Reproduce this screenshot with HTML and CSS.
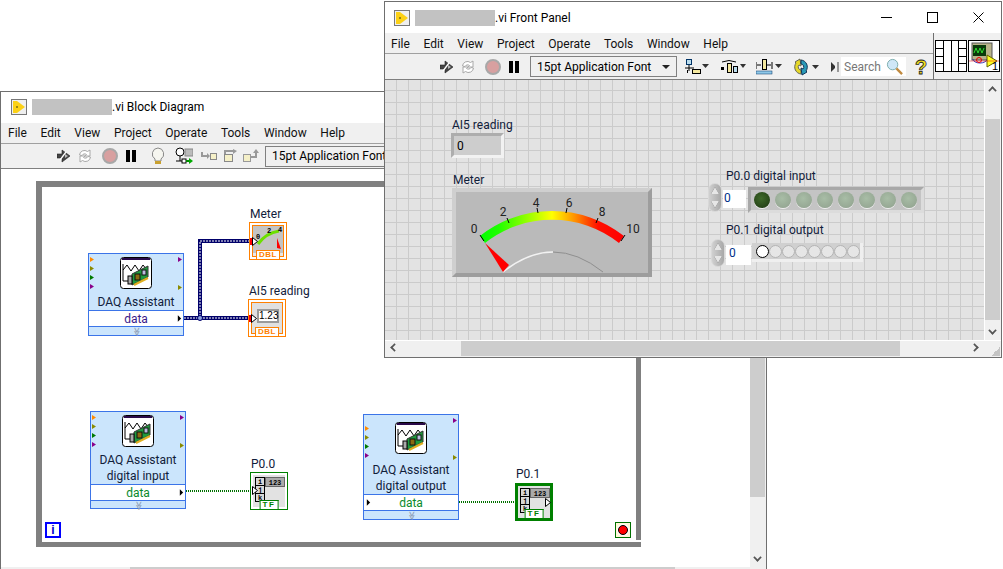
FILE: index.html
```html
<!DOCTYPE html>
<html lang="en">
<head>
<meta charset="utf-8">
<title>Block Diagram and Front Panel</title>
<link rel="stylesheet" href="styles.css">
</head>
<body>
<svg class="defs" width="0" height="0" aria-hidden="true">
  <defs>
    <linearGradient id="arcGrad" x1="480" x2="624" y1="0" y2="0" gradientUnits="userSpaceOnUse">
      <stop offset="0" stop-color="#00ff00"/><stop offset=".13" stop-color="#20ff00"/>
      <stop offset=".38" stop-color="#b4ff00"/><stop offset=".5" stop-color="#ffff00"/>
      <stop offset=".66" stop-color="#ff9000"/><stop offset=".82" stop-color="#ff1000"/><stop offset="1" stop-color="#ff0000"/>
    </linearGradient>
    <symbol id="vi" viewBox="0 0 16 16">
      <rect x=".5" y=".5" width="15" height="15" fill="#efefef" stroke="#777"/>
      <path d="M2 2h4l8 6-8 6H2z" fill="#fcd116"/><circle cx="6" cy="8" r="1" fill="#7a6a10"/>
    </symbol>
    <symbol id="run" viewBox="0 0 14 14">
      <path d="M0 5h5V1l8 6-8 6V9H0z" fill="#444" stroke="#222" stroke-width=".6"/>
      <path d="M3 11l6-8" stroke="#fff" stroke-width="1.300"/>
      <path d="M8 5l3 2-3 2z" fill="#bbb"/>
    </symbol>
    <symbol id="cont" viewBox="0 0 14 14">
      <path d="M1.500 6a5 5 0 0 1 8-3.500l2.500-1.500v6H7l1.500-1.500a3 3 0 0 0-4.500 1z" fill="#fff" stroke="#a8a8a8"/>
      <path d="M12.500 8a5 5 0 0 1-8 3.500l-2.500 1.500V7h5l-1.500 1.500a3 3 0 0 0 4.500-1z" fill="#fff" stroke="#a8a8a8"/>
    </symbol>
    <symbol id="daq" viewBox="0 0 32 32">
      <rect x=".5" y=".5" width="31" height="31" rx="3" fill="#fff" stroke="#000"/>
      <rect x="2" y="1" width="28" height="2" fill="#2a0a4a"/>
      <path d="M3 7v17h6M3 13l4-5 4 6 4-6 4 6 4-6 4 5" fill="none" stroke="#000"/>
      <path d="M12 17l16-8v11l-16 8z" fill="#1f9a3c" stroke="#333"/>
      <rect x="15" y="17" width="5" height="6" fill="#8a6a10" stroke="#111"/>
      <rect x="22" y="13" width="4" height="5" fill="#bbd" stroke="#111"/>
      <path d="M14 28l14-7" stroke="#e0b020" stroke-width="2"/>
      <rect x="8" y="19" width="4" height="8" fill="#aaa" stroke="#000"/>
    </symbol>
    <symbol id="arrow" viewBox="0 0 6 8"><path d="M1 0l4 4-4 4z"/></symbol>
    <symbol id="tin" viewBox="0 0 8 9"><rect x="0" y="1" width="3" height="7" fill="#f00"/><path d="M2.500 .5L7.500 4.500 2.500 8.500z" fill="#fff" stroke="#000"/></symbol>
    <symbol id="twhite" viewBox="0 0 6 9"><path d="M.5 .5L5.500 4.500 .5 8.500z" fill="#fff" stroke="#000"/></symbol>
    <symbol id="array" viewBox="0 0 36 36">
      <rect x="2" y="2" width="32" height="32" fill="#e2e2e2"/>
      <rect x="4.500" y="4.500" width="9" height="8" fill="#d8d8d8" stroke="#000"/>
      <rect x="4.500" y="12.500" width="9" height="8" fill="#d8d8d8" stroke="#000"/>
      <rect x="4.500" y="20.500" width="9" height="8" fill="#d8d8d8" stroke="#000"/>
      <rect x="14.500" y="4.500" width="19" height="9" fill="#aaa" stroke="#666"/>
      <text x="24" y="12" class="mini">123</text>
      <text x="9" y="11" class="mini">i</text><text x="9" y="19" class="mini">j</text><text x="9" y="27" class="mini">k</text>
    </symbol>
    <symbol id="meterIcon" viewBox="0 0 36 36">
      <rect x="3" y="3" width="30" height="27" fill="#c4c4c4"/>
      <path d="M8 21q8-11 21-13" fill="none" stroke="#6ce000" stroke-width="3"/>
      <path d="M27 15l4 11-4-1z" fill="#f00"/>
      <text x="8" y="16" class="mini">0</text><text x="19" y="10" class="mini">2</text><text x="30" y="9" class="mini">4</text>
    </symbol>
  </defs>
</svg>

<section class="window bd-window">
  <header class="titlebar">
    <svg class="vi-icon"><use href="#vi"/></svg>
    <span class="redacted"></span>
    <span class="title-text">.vi Block Diagram</span>
  </header>
  <nav class="menubar">
    <span>File</span><span>Edit</span><span>View</span><span>Project</span><span>Operate</span><span>Tools</span><span>Window</span><span>Help</span>
  </nav>
  <div class="toolbar bd-toolbar">
    <svg class="tb run"><use href="#run"/></svg>
    <svg class="tb cont"><use href="#cont"/></svg>
    <span class="abort"></span>
    <span class="pause"></span>
    <svg class="tb bulb" viewBox="0 0 16 18"><path d="M8 1a6 6 0 0 0-3 11v2h6v-2a6 6 0 0 0-3-11z" fill="#f6f6f0" stroke="#888"/><path d="M5 14h6v3H5z" fill="#c8a030"/></svg>
    <svg class="tb probe" viewBox="0 0 18 18"><circle cx="5" cy="5" r="4" fill="#fff" stroke="#000"/><rect x="10" y="2" width="8" height="7" fill="#bbb" stroke="#888"/><path d="M5 9v5H1M5 14h5" stroke="#000" fill="none"/><rect x="7" y="12" width="4" height="4" fill="#fff" stroke="#000"/><path d="M11 14h4" stroke="#080" stroke-width="2"/><path d="M14 11l4 3-4 3z" fill="#0a0"/></svg>
    <svg class="tb step" viewBox="0 0 16 14"><path d="M1 3v4h6" fill="none" stroke="#999" stroke-width="2"/><path d="M6 4l3 3-3 3z" fill="#999"/><rect x="9.500" y="4.500" width="6" height="6" fill="#f5f0c8" stroke="#888"/></svg>
    <svg class="tb step" viewBox="0 0 16 14"><path d="M3 5V2h9" fill="none" stroke="#999" stroke-width="2"/><path d="M11 0l4 2-4 3z" fill="#999"/><rect x="2.500" y="5.500" width="8" height="7" fill="#f5f0c8" stroke="#888"/></svg>
    <svg class="tb step" viewBox="0 0 16 14"><rect x=".5" y="5.500" width="7" height="7" fill="#f5f0c8" stroke="#999"/><path d="M7 8h6V3" fill="none" stroke="#999" stroke-width="2"/><path d="M10 4l3-4 3 4z" fill="#999"/></svg>
    <div class="fontbox bd-fontbox">15pt Application Font</div>
  </div>
  <div class="work">
    <div class="canvas">
      <div class="loop">
        <span class="notch"></span>
      </div>
      <span class="iter">i</span>
      <span class="stop"><i></i></span>

      <svg class="wires" width="640" height="400">
        <path class="wire-blue" d="M183 149H199V72H249M199 149H249"/>
        <path class="wire-blue-in" d="M183 149H199V72H249M199 149H249"/>
        <circle cx="199" cy="149" r="2.500" fill="#8aa0e0" stroke="#00006a"/>
        <path class="wire-green" d="M185 322H250"/>
        <path class="wire-green" d="M458 333H515"/>
      </svg>

      <div class="daq daq-a">
        <svg class="daq-icon"><use href="#daq"/></svg>
        <div class="daq-name">DAQ Assistant</div>
        <div class="daq-data dbl">data<svg class="out"><use href="#arrow"/></svg></div>
        <div class="daq-foot">≫</div>
        <span class="pins"><i class="p-o"></i><i class="p-y"></i><i class="p-g"></i><i class="p-m"></i></span>
        <span class="rpins"><i class="p-m"></i><i class="p-y"></i></span>
      </div>
      <div class="daq daq-b">
        <svg class="daq-icon"><use href="#daq"/></svg>
        <div class="daq-name">DAQ Assistant<br>digital input</div>
        <div class="daq-data bool">data<svg class="out"><use href="#arrow"/></svg></div>
        <div class="daq-foot">≫</div>
        <span class="pins"><i class="p-o"></i><i class="p-y"></i><i class="p-g"></i><i class="p-m"></i></span>
        <span class="rpins"><i class="p-m"></i><i class="p-y"></i></span>
      </div>
      <div class="daq daq-c">
        <svg class="daq-icon"><use href="#daq"/></svg>
        <div class="daq-name">DAQ Assistant<br>digital output</div>
        <div class="daq-data bool"><svg class="in"><use href="#arrow"/></svg>data</div>
        <div class="daq-foot">≫</div>
        <span class="pins pins-low"><i class="p-o"></i><i class="p-y"></i><i class="p-g"></i><i class="p-m"></i></span>
        <span class="rpins rpins-wide"><i class="p-m"></i><i class="p-y"></i></span>
      </div>

      <span class="label l-meter">Meter</span>
      <span class="label l-ai5">AI5 reading</span>
      <span class="label l-p00">P0.0</span>
      <span class="label l-p01">P0.1</span>

      <div class="term orange t-meter">
        <svg class="term-art"><use href="#meterIcon"/></svg>
        <span class="tag tag-o">DBL</span>
        <svg class="tin"><use href="#tin"/></svg>
      </div>
      <div class="term orange t-ai5">
        <span class="num-123">1.23</span>
        <span class="tag tag-o">DBL</span>
        <svg class="tin"><use href="#tin"/></svg>
      </div>
      <div class="term green t-p00">
        <svg class="term-art"><use href="#array"/></svg>
        <span class="tag tag-g">TF</span>
        <svg class="twhite tw-in"><use href="#twhite"/></svg>
      </div>
      <div class="term green thick t-p01">
        <svg class="term-art"><use href="#array"/></svg>
        <span class="tag tag-g">TF</span>
        <svg class="twhite tw-out"><use href="#twhite"/></svg>
      </div>
    </div>
    <div class="vbar bd-vbar"><span class="thumb-v"></span><span class="chev-d"></span></div>
  </div>
  <div class="hbar bd-hbar"><span class="thumb-h"></span></div>
</section>

<section class="window fp-window">
  <header class="titlebar">
    <svg class="vi-icon"><use href="#vi"/></svg>
    <span class="redacted"></span>
    <span class="title-text">.vi Front Panel</span>
    <span class="controls">
      <svg class="ctl" viewBox="0 0 11 11"><path d="M0 5.500h11" stroke="#000"/></svg>
      <svg class="ctl" viewBox="0 0 11 11"><rect x=".5" y=".5" width="10" height="10" fill="none" stroke="#000"/></svg>
      <svg class="ctl" viewBox="0 0 11 11"><path d="M.5 .5l10 10M10.500 .5l-10 10" stroke="#000"/></svg>
    </span>
  </header>
  <div class="fp-head">
    <div class="fp-bars">
      <nav class="menubar">
        <span>File</span><span>Edit</span><span>View</span><span>Project</span><span>Operate</span><span>Tools</span><span>Window</span><span>Help</span>
      </nav>
      <div class="toolbar fp-toolbar">
        <svg class="tb run"><use href="#run"/></svg>
        <svg class="tb cont"><use href="#cont"/></svg>
        <span class="abort"></span>
        <span class="pause"></span>
        <div class="fontbox fp-fontbox">15pt Application Font<i class="caret"></i></div>
        <svg class="tool t-align" viewBox="0 0 24 16"><rect x="1.500" y=".5" width="5" height="5" fill="#bde" stroke="#036"/><path d="M0 9h9M4 6v6" stroke="#000"/><path d="M2 11h1v3H2z"/><rect x="7.500" y="10.500" width="8" height="4" fill="#f5e9a0" stroke="#000"/><path d="M17 5h7l-3.500 4z" fill="#333"/></svg>
        <svg class="tool t-dist" viewBox="0 0 26 16"><path d="M2 3q7-3 14 0" fill="none" stroke="#000"/><rect x="1" y="8" width="3" height="3"/><rect x="7.500" y="4.500" width="4" height="9" fill="#f5e9a0" stroke="#000"/><rect x="13.500" y="7.500" width="4" height="6" fill="#bde" stroke="#000"/><path d="M20 5h6l-3 4z" fill="#333"/></svg>
        <svg class="tool t-resize" viewBox="0 0 26 16"><path d="M0 3v7M16 3v7M1 6h4M11 6h4" stroke="#000"/><rect x="6.500" y=".5" width="4" height="10" fill="#f5e9a0" stroke="#000"/><rect x="0" y="12" width="16" height="3" fill="#8fc8e8" stroke="#036" stroke-width=".5"/><path d="M19 5h7l-3.500 4z" fill="#333"/></svg>
        <svg class="tool t-order" viewBox="0 0 26 18"><path d="M7 1L2 4l1 1a7 7 0 0 0 5 11v-4a3 3 0 0 1-2-5l2 1z" fill="#e6d829" stroke="#665"/><path d="M9 17l5-3-1-1a7 7 0 0 0-5-11v4a3 3 0 0 1 2 5l-2-1z" fill="#2a9ab8" stroke="#135"/><path d="M19 7h7l-3.500 4z" fill="#333"/></svg>
        <span class="more"></span>
        <span class="search">Search<svg class="lens" viewBox="0 0 18 18"><circle cx="7" cy="7" r="5.500" fill="#cfe7f7" stroke="#7aa"/><path d="M11 11l6 6" stroke="#c08a40" stroke-width="2.500"/></svg></span>
        <span class="help">?</span>
      </div>
    </div>
    <div class="pane-area">
      <svg class="conn" viewBox="0 0 32 32"><rect x=".5" y=".5" width="31" height="31" fill="#fff" stroke="#000"/><path d="M8.500 1v30M16.500 1v30M23.500 1v30M1 8.500h7.500M1 16.500h7.500M1 23.500h7.500M23.500 8.500h8M23.500 16.500h8M23.500 23.500h8" stroke="#000" fill="none"/></svg>
      <svg class="conn" viewBox="0 0 32 32"><rect x=".5" y=".5" width="31" height="31" fill="#fff" stroke="#000"/><rect x="4" y="3" width="20" height="17" fill="#b8b48a" stroke="#555"/><rect x="5" y="5" width="13" height="11" fill="#0a3a0a"/><path d="M6 13l2-5 2 5 2-5 2 5 2-5" fill="none" stroke="#30e030"/><path d="M5 19a7 4 0 0 0 14 0" fill="none" stroke="#33b"/><circle cx="11" cy="20" r="2.500" fill="none" stroke="#e00"/><path d="M19 15l10 6-10 6z" fill="#ffff20" stroke="#660"/><path d="M1 21h30" stroke="#e00" stroke-width=".5"/><text x="27" y="30" class="one">1</text></svg>
    </div>
  </div>
  <div class="work">
    <div class="panel">
      <span class="label fl-ai5">AI5 reading</span>
      <div class="num-ind">0</div>
      <span class="label fl-meter">Meter</span>
      <svg class="meter" width="200" height="89" viewBox="452 188 200 89">
        <rect x="452" y="188" width="200" height="89" fill="#bababa"/>
        <path d="M452 188h200l-4 4H456v81l-4 4z" fill="#cfcfcf"/>
        <path d="M652 188v89H452l4-4h192v-81z" fill="#9d9d9d"/>
        <path d="M480 236A116 116 0 0 1 624 236L619 243A108 108 0 0 0 485 243Z" fill="url(#arcGrad)"/>
        <path d="M480 235l4 6M507 218l2 5M537 208l1 5M567 208l-1 5M598 218l-2 5M625 235l-4 6" stroke="#000"/>
        <path d="M503 272Q528 252 553 252" fill="none" stroke="#f2f2f2" stroke-width="1.500"/>
        <path d="M553 252Q578 252 603 272" fill="none" stroke="#8f8f8f"/>
        <path d="M485 243L509 265 503 272Z" fill="#f00"/>
        <g class="scale">
          <text x="474" y="233">0</text><text x="503" y="216">2</text><text x="536" y="207">4</text>
          <text x="569" y="207">6</text><text x="602" y="216">8</text><text x="633" y="233">10</text>
        </g>
      </svg>
      <span class="label fl-p00">P0.0 digital input</span>
      <div class="spin sp-a"><span class="up"></span><span class="down"></span></div>
      <div class="field f-a">0</div>
      <div class="leds leds-a"><i class="on"></i><i></i><i></i><i></i><i></i><i></i><i></i><i></i></div>
      <span class="label fl-p01">P0.1 digital output</span>
      <div class="spin sp-b"><span class="up"></span><span class="down"></span></div>
      <div class="field f-b">0</div>
      <div class="leds leds-b"><i class="on"></i><i></i><i></i><i></i><i></i><i></i><i></i><i></i></div>
    </div>
    <div class="vbar fp-vbar"><span class="chev-u"></span><span class="thumb-v"></span><span class="chev-d"></span></div>
  </div>
  <div class="hbar fp-hbar"><span class="chev-l"></span><span class="thumb-h"></span><span class="chev-r"></span><span class="grip"></span></div>
</section>
</body>
</html>
```

FILE: styles.css
```css
* { box-sizing: border-box; }
html, body { margin: 0; height: 100%; }
body {
  position: relative;
  width: 1003px;
  height: 569px;
  overflow: hidden;
  background: #fff;
  font: 12px/16px Roboto, "Noto Sans", sans-serif;
  color: #000;
}
.defs { position: absolute; }

.window {
  position: absolute;
  display: flex;
  flex-direction: column;
  background: #fff;
  border: 1px solid #6f6f6f;
}
.bd-window { left: 0; top: 91px; width: 767px; height: 478px; border-bottom: 0; }
.fp-window { left: 384px; top: 1px; width: 618px; height: 357px; }

.titlebar { display: flex; align-items: center; flex: none; background: #fff; height: 31px; }
.bd-window .titlebar { padding: 0 0 2px 10px; }
.fp-window .titlebar { padding-left: 9px; }
.vi-icon { width: 16px; height: 16px; flex: none; }
.redacted { width: 80px; height: 16px; margin-left: 5px; background: #c2c2c2; flex: none; }
.title-text { white-space: nowrap; }
.controls { display: flex; margin-left: auto; padding-right: 17px; gap: 35px; }
.ctl { width: 11px; height: 11px; }

.menubar {
  display: flex;
  flex: none;
  height: 21px;
  padding: 0 0 0 7px;
  gap: 13.6px;
  align-items: center;
  background: #f0f0f0;
  border-bottom: 1px solid #a0a0a0;
  color: #111;
}
.fp-window .menubar { padding: 1px 0 0 6px; }
.toolbar {
  display: flex;
  align-items: center;
  flex: none;
  height: 25px;
  background: #f0f0f0;
  border-bottom: 1px solid #7f7f7f;
}
.bd-toolbar { padding-left: 56px; overflow: hidden; }
.fp-toolbar { padding-left: 55px; height: 26px; }
.tb { width: 14px; height: 14px; flex: none; }
.cont { margin-left: 7px; }
.abort {
  width: 16px; height: 16px; margin-left: 10px; flex: none;
  border-radius: 50%; background: #d8a0a0; border: 2px solid #a8a8a8;
}
.pause {
  width: 10px; height: 12px; margin-left: 8px; flex: none;
  border-left: 4px solid #000; border-right: 4px solid #000;
}
.bulb { width: 16px; height: 18px; margin-left: 14px; }
.probe { width: 18px; height: 18px; margin-left: 9px; }
.step { width: 16px; height: 14px; margin-left: 8px; }
.step + .step { margin-left: 5px; }
.fontbox {
  display: flex; align-items: center; flex: none;
  height: 21px; padding-left: 6px;
  border: 1px solid #808080; background: #f0f0f0; white-space: nowrap;
}
.bd-fontbox { margin-left: 6px; width: 130px; }
.fp-fontbox { margin-left: 11px; width: 147px; position: relative; }
.caret {
  position: absolute; right: 6px; top: 8px;
  border: 4px solid transparent; border-top: 4px solid #222; border-bottom: 0;
}
.tool { height: 16px; flex: none; }
.t-align { width: 24px; margin-left: 8px; }
.t-dist { width: 26px; margin-left: 11px; }
.t-resize { width: 26px; margin-left: 10px; }
.t-order { width: 26px; margin-left: 11px; height: 18px; }
.more {
  width: 6px; height: 10px; margin-left: 12px; flex: none;
  border-left: 4px solid #333; border-top: 4px solid transparent; border-bottom: 4px solid transparent;
  box-shadow: 2px 0 0 #999;
}
.search {
  display: flex; align-items: center; flex: none;
  width: 65px; height: 19px; margin-left: 4px; padding-left: 3px;
  background: #fff; color: #777;
}
.lens { width: 17px; height: 17px; margin-left: 5px; }
.help {
  margin-left: 9px; flex: none;
  font: bold 20px/20px "Liberation Sans", sans-serif;
  color: #f3e21c; -webkit-text-stroke: .8px #222;
}

.fp-head { display: flex; flex: none; height: 47px; }
.fp-bars { width: 548px; flex: none; }
.pane-area {
  flex: 1; display: flex; align-items: center; gap: 1px;
  padding: 0 0 0 1px; background: #f0f0f0;
  border-left: 1px solid #6f6f6f; border-bottom: 1px solid #7f7f7f;
}
.conn { width: 32px; height: 32px; flex: none; }
.one { font: 11px "Liberation Sans", sans-serif; text-anchor: middle; }

.work { flex: 1; display: flex; min-height: 0; }
.canvas { position: relative; flex: 1; background: #fff; }
.vbar { flex: none; width: 16px; background: #f0f0f0; position: relative; }
.fp-vbar { width: 17px; border-left: 1px solid #fff; }
.thumb-v { position: absolute; left: 0; right: 1px; background: #cdcdcd; }
.bd-vbar .thumb-v { top: 0; height: 328px; }
.fp-vbar .thumb-v { top: 39px; height: 201px; }
.chev-d, .chev-u {
  position: absolute; left: 4px; width: 7px; height: 7px;
  border: solid #555; border-width: 0 2px 2px 0; transform: rotate(45deg) scale(.85);
}
.chev-d { bottom: 6px; }
.chev-u { top: 7px; transform: rotate(225deg) scale(.85); }
.hbar { position: relative; flex: none; height: 17px; background: #f0f0f0; }
.bd-hbar { height: 2px; }
.thumb-h { position: absolute; top: 0; bottom: 1px; background: #cdcdcd; }
.bd-hbar .thumb-h { left: 129px; width: 545px; bottom: 0; }
.fp-hbar { border-top: 1px solid #fff; }
.fp-hbar .thumb-h { left: 76px; width: 439px; }
.chev-l, .chev-r {
  position: absolute; top: 3px; width: 7px; height: 7px;
  border: solid #555; border-width: 2px 2px 0 0; transform: rotate(45deg) scale(.85);
}
.chev-l { left: 6px; transform: rotate(225deg) scale(.85); }
.chev-r { left: 586px; }
.grip {
  position: absolute; right: 1px; bottom: 1px; width: 9px; height: 9px;
  background: linear-gradient(135deg, transparent 50%, #c4c4c4 50%);
}

.loop {
  position: absolute; left: 35px; top: 12px; width: 605px; height: 366px;
  border: solid #808080; border-width: 6px 5px 5px 6px;
}
.notch {
  position: absolute; right: -5px; bottom: 0; width: 5px; height: 2px; background: #fff;
}
.iter {
  position: absolute; left: 44px; top: 353px; width: 16px; height: 16px;
  border: 2px solid #0000ff; background: #fff; color: #0000d0;
  font: bold 12px/12px "Liberation Sans", sans-serif; text-align: center;
}
.stop {
  position: absolute; left: 614px; top: 353px; width: 16px; height: 16px;
  display: flex; align-items: center; justify-content: center;
  border: 1px solid #006f00; background: #fff9d8;
}
.stop i { width: 10px; height: 10px; border-radius: 50%; background: #f00; border: 1px solid #000; box-shadow: 0 0 0 1px #fff; }

.wires { position: absolute; left: 0; top: 0; }
.wire-blue { fill: none; stroke: #00006a; stroke-width: 4; }
.wire-blue-in { fill: none; stroke: #fff; stroke-width: 1; stroke-dasharray: 2 1; }
.wire-green { fill: none; stroke: #006f00; stroke-width: 2; stroke-dasharray: 1 1; }

.daq {
  position: absolute; width: 96px;
  display: flex; flex-direction: column; align-items: center;
  background: #cbe5fc; border: 1px solid #3b74e8;
}
.daq-a { left: 87px; top: 84px; height: 83px; }
.daq-b { left: 89px; top: 242px; height: 98px; }
.daq-c { left: 362px; top: 245px; height: 106px; }
.daq-icon { width: 32px; height: 32px; margin-top: 3px; flex: none; }
.daq-c .daq-icon { margin-top: 7px; }
.daq-name { margin-top: 5px; text-align: center; line-height: 16px; white-space: nowrap; color: #10203a; }
.daq-c .daq-name { margin-top: 8px; }
.daq-data {
  position: relative; align-self: stretch; height: 17px; margin-top: auto;
  background: #fff; border-top: 1px solid #3b74e8; border-bottom: 1px solid #3b74e8;
  text-align: center; line-height: 16px;
}
.dbl { color: #3a1a8a; }
.bool { color: #0a8a2a; }
.out, .in { position: absolute; top: 4px; width: 5px; height: 7px; }
.out { right: 1px; }
.in { left: 2px; }
.daq-foot {
  height: 9px; flex: none; line-height: 8px; font-size: 9px;
  color: #8a9ab0; transform: rotate(90deg);
}
.pins, .rpins { position: absolute; display: flex; flex-direction: column; }
.pins { left: 1px; top: 3px; gap: 4px; }
.pins-low { top: 11px; }
.rpins { right: 1px; top: 3px; gap: 23px; }
.rpins-wide { gap: 32px; }
.pins i, .rpins i {
  display: block; width: 4px; height: 5px;
  clip-path: polygon(0 0, 100% 50%, 0 100%);
}
.p-o { background: #ff8a00; }
.p-y { background: #8a8a00; }
.p-g { background: #007a00; }
.p-m { background: #8a008a; }

.label { position: absolute; line-height: 15px; white-space: nowrap; color: #10203a; }
.l-meter { left: 249px; top: 38px; }
.l-ai5 { left: 248px; top: 115px; }
.l-p00 { left: 250px; top: 288px; }
.l-p01 { left: 515px; top: 298px; }

.term { position: absolute; width: 38px; height: 38px; background: #e8e8e8; }
.term-art { position: absolute; left: 0; top: 0; width: 36px; height: 36px; }
.orange { border: 1px solid #ff8000; box-shadow: inset 0 0 0 2px #fff, inset 0 0 0 3px #ff8000; }
.green { border: 1px solid #008000; background: #fff; }
.thick { border-width: 3px; }
.t-meter { left: 248px; top: 53px; }
.t-ai5 { left: 247px; top: 130px; background: #e0e0e0; }
.t-p00 { left: 249px; top: 303px; }
.t-p01 { left: 514px; top: 314px; }
.thick .term-art { left: -2px; top: -2px; }
.tag {
  position: absolute; left: 50%; bottom: 0; transform: translateX(-50%);
  height: 9px; background: #fff; padding: 0 2px;
  font: bold 8px/8px "Liberation Sans", sans-serif; letter-spacing: .5px;
}
.tag-o { color: #ff8000; border: 1px solid #ff8000; border-bottom: 0; }
.tag-g { color: #008000; border: 1px solid #008000; border-bottom: 0; min-width: 15px; text-align: center; letter-spacing: 1.5px; }
.tin { position: absolute; left: 0; top: 14px; width: 8px; height: 9px; }
.twhite { position: absolute; width: 6px; height: 9px; }
.tw-in { left: 1px; top: 13px; }
.tw-out { right: -1px; top: 12px; }
.num-123 {
  position: absolute; left: 8px; top: 9px; width: 22px; height: 14px;
  background: #fff; border: 2px solid #9a9a9a;
  font: 10px/10px "Liberation Sans", sans-serif; text-align: center;
}
.mini { font: bold 7px "Liberation Mono", monospace; text-anchor: middle; }

.panel {
  position: relative; flex: 1;
  background-color: #e3e3e3;
  background-image:
    linear-gradient(#cbcbcb 1px, transparent 1px),
    linear-gradient(90deg, #cbcbcb 1px, transparent 1px);
  background-size: 12px 12px;
  background-position: 11px 10px;
}
.fl-ai5 { left: 67px; top: 38px; }
.num-ind {
  position: absolute; left: 66px; top: 53px; width: 53px; height: 25px;
  padding: 2px 0 0 3px; background: #cdcdcd;
  border: 3px solid; border-color: #adadad #f2f2f2 #f2f2f2 #adadad;
}
.fl-meter { left: 68px; top: 93px; }
.meter { position: absolute; left: 67px; top: 108px; }
.scale text { font: 12px Roboto, sans-serif; text-anchor: middle; fill: #222; }
.fl-p00 { left: 341px; top: 89px; }
.fl-p01 { left: 341px; top: 143px; }
.spin {
  position: absolute; width: 14px; display: flex; flex-direction: column; align-items: center; justify-content: space-around;
  border-radius: 7px; background: linear-gradient(90deg, #d0d0d0, #a8a8a8); border: 1px solid #d8d8d8;
}
.sp-a { left: 323px; top: 103px; height: 29px; }
.sp-b { left: 326px; top: 159px; height: 28px; }
.up, .down { filter: drop-shadow(0 0 .6px #444); }
.up { border: 4px solid transparent; border-bottom: 7px solid #e6e6e6; border-top: 0; }
.down { border: 4px solid transparent; border-top: 7px solid #e6e6e6; border-bottom: 0; }
.field {
  position: absolute; background: #fff; color: #00308a; padding-left: 1px; line-height: 17px;
}
.f-a { left: 338px; top: 110px; width: 23px; height: 18px; }
.f-b { left: 341px; top: 165px; width: 25px; height: 20px; padding-left: 3px; }
.leds { position: absolute; display: flex; align-items: center; }
.leds-a {
  left: 363px; top: 107px; width: 176px; height: 26px; padding-left: 3px; gap: 5px;
  background: #c4c4c4; border: 3px solid; border-color: #a8a8a8 #dcdcdc #dcdcdc #a8a8a8;
}
.leds-a i { width: 16px; height: 16px; border-radius: 50%; background: radial-gradient(circle at 45% 40%, #a8bda6, #8fa08d); box-shadow: 0 1px 0 #efefef; }
.leds-a i.on { background: radial-gradient(circle at 45% 40%, #3f6a2a, #1c3510); }
.leds-b {
  left: 367px; top: 163px; width: 111px; height: 19px; padding-left: 4px; gap: 0;
  background: #d0d0d0; border-right: 3px solid #efefef; border-bottom: 3px solid #efefef;
}
.leds-b i { width: 13px; height: 13px; border-radius: 50%; background: #e6e6e6; border: 1px solid #b4b4b4; }
.leds-b i.on { background: #fff; border-color: #000; }
```
